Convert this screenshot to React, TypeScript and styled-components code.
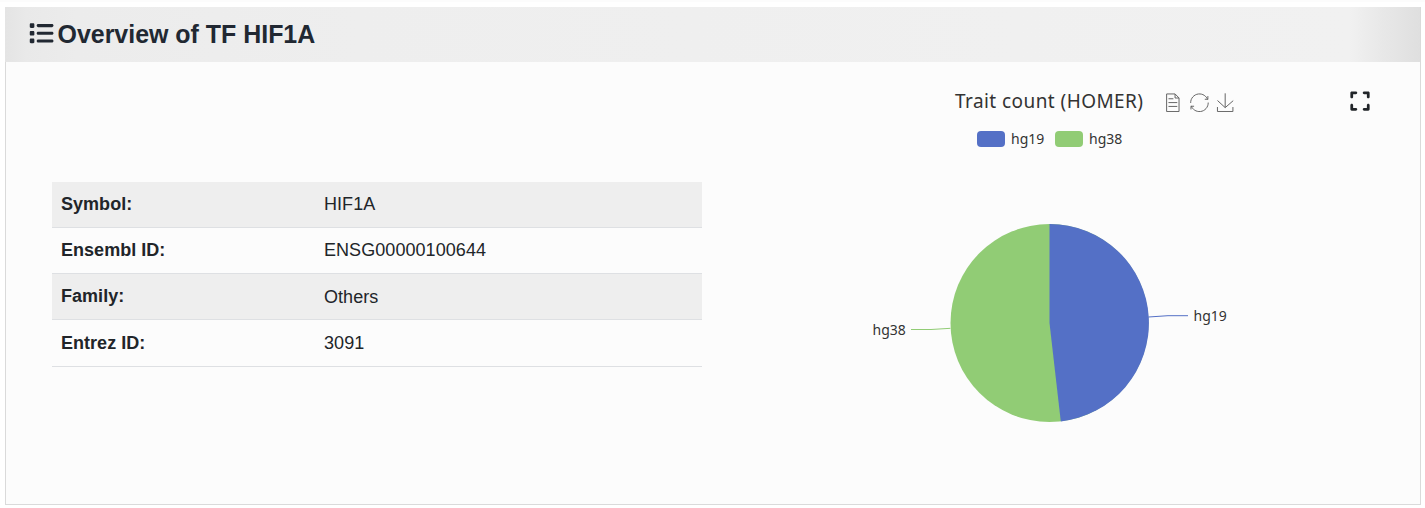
import React from 'react';
import styled, { createGlobalStyle } from 'styled-components';
import { FaExpand, FaList } from 'react-icons/fa6';

const BLUE = '#5470c6';
const GREEN = '#91cc75';

const GlobalStyle = createGlobalStyle`
  *, *::before, *::after { box-sizing: border-box; }
  body {
    margin: 0;
    background: #fff;
    color: #212529;
    font: 18px/27px "Liberation Sans", Arial, sans-serif;
  }
`;

const Page = styled.div`
  height: 508px;
  padding: 5px 4px 3px 5px;
  border-top: 2px solid #fcfcfc;
`;

const Card = styled.section`
  display: flex;
  flex-direction: column;
  height: 498px;
  border: 1px solid #dadada;
  border-top: 0;
  background: #fcfcfc;
`;

const Header = styled.header`
  display: flex;
  align-items: center;
  gap: 4px;
  height: 55px;
  flex: none;
  margin: 0 0 0 -1px;
  padding: 0 0 2px 24px;
  color: #212832;
  background: linear-gradient(90deg, #e4e4e4 0, #e9e9e9 1.5%, #ececec 5%, #eee 25%, #f1f1f1 95%, #e8e8e8 97.3%, #dfdfdf 100%);
`;

const Title = styled.h1`
  margin: 0;
  font-size: 24.95px;
  line-height: 30px;
`;

const Body = styled.div`
  display: grid;
  grid-template-columns: 650px 1fr;
  column-gap: 85px;
  flex: 1;
  padding-left: 46px;
`;

const Facts = styled.table`
  align-self: start;
  width: 100%;
  margin-top: 120px;
  border-collapse: separate;
  border-spacing: 0;
  table-layout: fixed;
`;

const FactRow = styled.tr<{ $height: number }>`
  height: ${(p) => p.$height}px;
  &:nth-child(odd) { background: #eee; }
`;

const FactName = styled.th<{ $last: boolean }>`
  width: 263px;
  padding: ${(p) => (p.$last ? '1px 9px 0' : '0 9px 1px')};
  border-bottom: 1px solid #dee0e3;
  text-align: left;
  letter-spacing: 0.03px;
`;

const FactValue = styled.td<{ $drop?: boolean }>`
  padding: ${(p) => (p.$drop ? '1px 9px 0' : '0 9px 1px')};
  border-bottom: 1px solid #dee0e3;
  letter-spacing: 0.06px;
`;

const ChartPanel = styled.div`
  display: flex;
  flex-direction: column;
  color: #333;
  font-family: "Noto Sans", "Open Sans", sans-serif;
`;

const ChartHeader = styled.div`
  display: flex;
  align-items: center;
  height: 30px;
  margin-top: 24px;
  padding-left: 168px;
`;

const ChartTitle = styled.h2`
  width: 189px;
  margin: 0;
  font-size: 19px;
  font-weight: 400;
  letter-spacing: 0.43px;
  white-space: nowrap;
`;

const Toolbox = styled.div`
  display: flex;
  gap: 7px;
  margin: 3px 0 0 19px;
`;

const ExpandButton = styled.button`
  display: flex;
  margin: 0 49px 0 auto;
  padding: 0;
  border: 0;
  background: none;
  color: #212529;
  font-size: 22px;
`;

const ToolIcon = styled.svg`
  width: 19.5px;
  height: 19.5px;
  fill: none;
  stroke: #666;
  path { vector-effect: non-scaling-stroke; }
`;

const Legend = styled.div`
  display: flex;
  gap: 10px;
  height: 20px;
  margin-top: 13px;
  padding-left: 190px;
`;

const LegendItem = styled.div`
  display: flex;
  align-items: center;
  gap: 6px;
  width: 68px;
  font-size: 14px;
  line-height: 20px;
`;

const Swatch = styled.span<{ $color: string }>`
  flex: none;
  width: 28px;
  height: 16px;
  border-radius: 4px;
  background: ${(p) => p.$color};
`;

const Pie = styled.svg`
  display: block;
  width: 460px;
  height: 290px;
  font-size: 14px;
  fill: #333;
`;

const facts = [
  { name: 'Symbol:', value: 'HIF1A', height: 46 },
  { name: 'Ensembl ID:', value: 'ENSG00000100644', height: 46 },
  { name: 'Family:', value: 'Others', height: 46, drop: true },
  { name: 'Entrez ID:', value: '3091', height: 47, drop: true, last: true },
];

const tools = [
  'M17.5,17.3H33 M45.4,29.5h-28 M11.5,2v56H51V14.8L38.4,2H11.5z M38.4,2.2v12.7H51 M45.4,41.7h-28',
  'M47,18.9h9.8V8.7 M56.3,20.1C52.1,9,40.5,0.6,26.8,2.1C12.6,3.7,1.6,16.2,2.1,30.6 M13,41.1H3.1v10.2 M3.7,39.9c4.2,11.1,15.8,19.5,29.5,18c14.2-1.6,25.2-14.1,24.7-28.5',
  'M4.7,22.9L29.3,45.5L54.7,23.4M4.6,43.6L4.6,58L53.8,58L53.8,43.6M29.2,45.1L29.2,0',
];

export default function App() {
  return (
    <Page>
      <GlobalStyle />
      <Card>
        <Header>
          <FaList size={24.5} />
          <Title>Overview of TF HIF1A</Title>
        </Header>
        <Body>
          <Facts>
            <tbody>
              {facts.map((f) => (
                <FactRow key={f.name} $height={f.height}>
                  <FactName $last={!!f.last}>{f.name}</FactName>
                  <FactValue $drop={f.drop}>{f.value}</FactValue>
                </FactRow>
              ))}
            </tbody>
          </Facts>
          <ChartPanel>
            <ChartHeader>
              <ChartTitle>Trait count (HOMER)</ChartTitle>
              <Toolbox>
                {tools.map((d) => (
                  <ToolIcon key={d} viewBox="0 -1 62 62">
                    <path d={d} />
                  </ToolIcon>
                ))}
              </Toolbox>
              <ExpandButton aria-label="Expand">
                <FaExpand />
              </ExpandButton>
            </ChartHeader>
            <Legend>
              <LegendItem><Swatch $color={BLUE} />hg19</LegendItem>
              <LegendItem><Swatch $color={GREEN} />hg38</LegendItem>
            </Legend>
            <Pie viewBox="787 149 460 290">
              <circle cx="1049.5" cy="323" r="99" fill={GREEN} />
              <path d="M1049.5 323V224A99 99 0 0 1 1060.8 421.4Z" fill={BLUE} />
              <path d="M1148.5 317L1168 315.7H1188" fill="none" stroke={BLUE} />
              <path d="M950.5 328.3L931 329.5H911" fill="none" stroke={GREEN} />
              <text x="1193.5" y="321">hg19</text>
              <text x="872.5" y="335">hg38</text>
            </Pie>
          </ChartPanel>
        </Body>
      </Card>
    </Page>
  );
}
